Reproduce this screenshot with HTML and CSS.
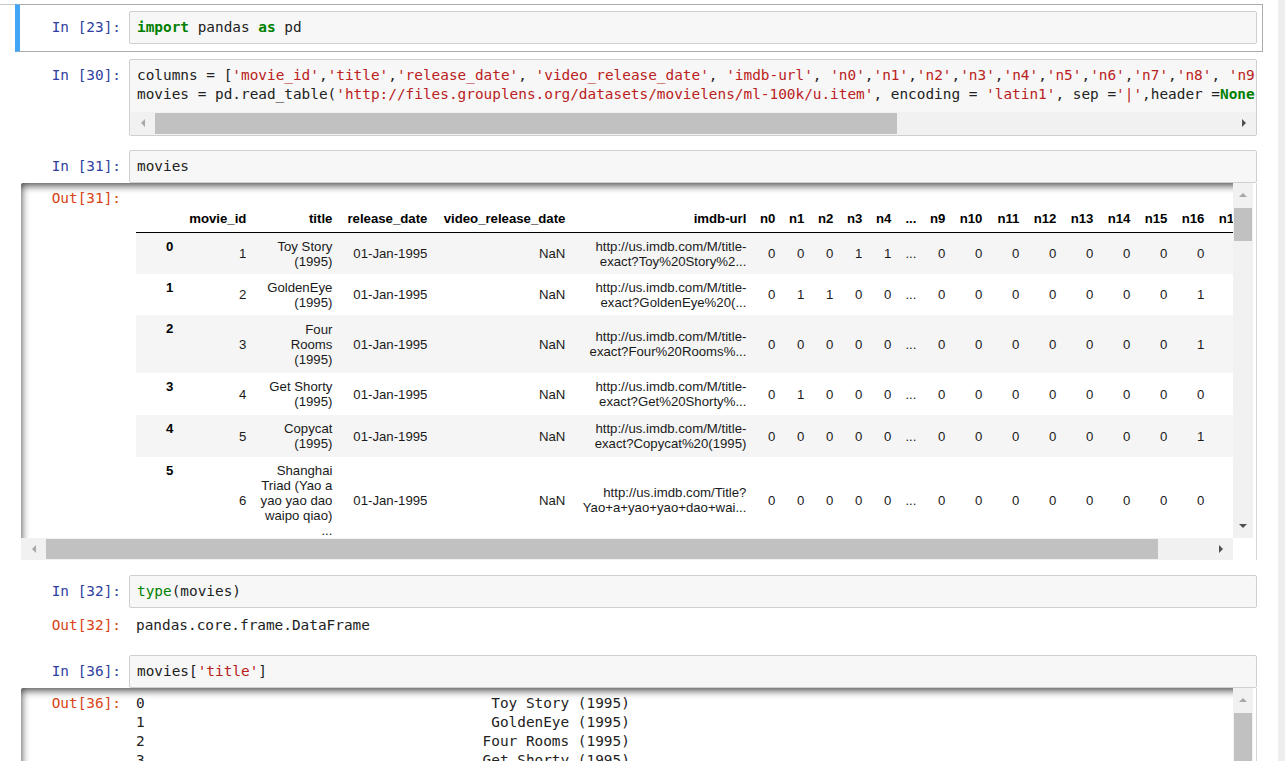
FILE: index.html
```html
<!DOCTYPE html>
<html>
<head>
<meta charset="utf-8">
<title>Notebook</title>
<link rel="stylesheet" href="styles.css">
</head>
<body>
<div class="page">
  <div class="notebook">
    <div class="rule"></div>

    <div class="cell selected">
      <div class="row">
        <div class="prompt in">In [23]:</div>
        <div class="input">
          <div class="code"><div class="line"><span class="kw">import</span> pandas <span class="kw">as</span> pd</div></div>
        </div>
      </div>
    </div>

    <div class="cell">
      <div class="row">
        <div class="prompt in">In [30]:</div>
        <div class="input">
          <div class="code tall"><div class="line">columns = [<span class="s">'movie_id'</span>,<span class="s">'title'</span>,<span class="s">'release_date'</span>, <span class="s">'video_release_date'</span>, <span class="s">'imdb-url'</span>, <span class="s">'n0'</span>,<span class="s">'n1'</span>,<span class="s">'n2'</span>,<span class="s">'n3'</span>,<span class="s">'n4'</span>,<span class="s">'n5'</span>,<span class="s">'n6'</span>,<span class="s">'n7'</span>,<span class="s">'n8'</span>, <span class="s">'n9'</span>, <span class="s">'n10'</span>, <span class="s">'n11'</span>, <span class="s">'n12'</span>, <span class="s">'n13'</span>, <span class="s">'n14'</span>, <span class="s">'n15'</span>, <span class="s">'n16'</span>, <span class="s">'n17'</span>, <span class="s">'n18'</span>]</div><div class="line">movies = pd.read_table(<span class="s">'http://files.grouplens.org/datasets/movielens/ml-100k/u.item'</span>, encoding = <span class="s">'latin1'</span>, sep =<span class="s">'|'</span>,header =<span class="kw">None</span>, names = columns)</div></div>
          <div class="hbar">
            <div class="btn"><i class="arr left"></i></div>
            <div class="track"><div class="thumb code-thumb"></div></div>
            <div class="btn"><i class="arr right"></i></div>
          </div>
        </div>
      </div>
    </div>

    <div class="cell">
      <div class="row">
        <div class="prompt in">In [31]:</div>
        <div class="input">
          <div class="code"><div class="line">movies</div></div>
        </div>
      </div>
      <div class="oscroll">
        <div class="viewport">
          <div class="orow">
            <div class="prompt out">Out[31]:</div>
            <div class="subarea">
              <table class="df">
                <colgroup>
                  <col class="c-idx"><col class="c-id"><col class="c-title"><col class="c-rel"><col class="c-vid"><col class="c-url">
                  <col class="c-n"><col class="c-n"><col class="c-n"><col class="c-n"><col class="c-n"><col class="c-dots"><col class="c-n">
                  <col class="c-nn"><col class="c-nn"><col class="c-nn"><col class="c-nn"><col class="c-nn"><col class="c-nn"><col class="c-nn"><col class="c-nn"><col class="c-nn">
                </colgroup>
                <thead>
                  <tr>
                    <th></th><th>movie_id</th><th>title</th><th>release_date</th><th>video_release_date</th><th>imdb-url</th>
                    <th>n0</th><th>n1</th><th>n2</th><th>n3</th><th>n4</th><th>...</th><th>n9</th>
                    <th>n10</th><th>n11</th><th>n12</th><th>n13</th><th>n14</th><th>n15</th><th>n16</th><th>n17</th><th>n18</th>
                  </tr>
                </thead>
                <tbody>
                  <tr>
                    <th>0</th><td>1</td><td>Toy Story<br>(1995)</td><td>01-Jan-1995</td><td>NaN</td><td>http://us.imdb.com/M/title-<br>exact?Toy%20Story%2...</td>
                    <td>0</td><td>0</td><td>0</td><td>1</td><td>1</td><td>...</td><td>0</td>
                    <td>0</td><td>0</td><td>0</td><td>0</td><td>0</td><td>0</td><td>0</td><td>0</td><td>0</td>
                  </tr>
                  <tr>
                    <th>1</th><td>2</td><td>GoldenEye<br>(1995)</td><td>01-Jan-1995</td><td>NaN</td><td>http://us.imdb.com/M/title-<br>exact?GoldenEye%20(...</td>
                    <td>0</td><td>1</td><td>1</td><td>0</td><td>0</td><td>...</td><td>0</td>
                    <td>0</td><td>0</td><td>0</td><td>0</td><td>0</td><td>0</td><td>1</td><td>0</td><td>0</td>
                  </tr>
                  <tr class="h58">
                    <th>2</th><td>3</td><td>Four<br>Rooms<br>(1995)</td><td>01-Jan-1995</td><td>NaN</td><td>http://us.imdb.com/M/title-<br>exact?Four%20Rooms%...</td>
                    <td>0</td><td>0</td><td>0</td><td>0</td><td>0</td><td>...</td><td>0</td>
                    <td>0</td><td>0</td><td>0</td><td>0</td><td>0</td><td>0</td><td>1</td><td>0</td><td>0</td>
                  </tr>
                  <tr class="h42">
                    <th>3</th><td>4</td><td>Get Shorty<br>(1995)</td><td>01-Jan-1995</td><td>NaN</td><td>http://us.imdb.com/M/title-<br>exact?Get%20Shorty%...</td>
                    <td>0</td><td>1</td><td>0</td><td>0</td><td>0</td><td>...</td><td>0</td>
                    <td>0</td><td>0</td><td>0</td><td>0</td><td>0</td><td>0</td><td>0</td><td>0</td><td>0</td>
                  </tr>
                  <tr class="h42">
                    <th>4</th><td>5</td><td>Copycat<br>(1995)</td><td>01-Jan-1995</td><td>NaN</td><td>http://us.imdb.com/M/title-<br>exact?Copycat%20(1995)</td>
                    <td>0</td><td>0</td><td>0</td><td>0</td><td>0</td><td>...</td><td>0</td>
                    <td>0</td><td>0</td><td>0</td><td>0</td><td>0</td><td>0</td><td>1</td><td>0</td><td>0</td>
                  </tr>
                  <tr>
                    <th>5</th><td>6</td><td>Shanghai<br>Triad (Yao a<br>yao yao dao<br>waipo qiao)<br>...</td><td>01-Jan-1995</td><td>NaN</td><td>http://us.imdb.com/Title?<br>Yao+a+yao+yao+dao+wai...</td>
                    <td>0</td><td>0</td><td>0</td><td>0</td><td>0</td><td>...</td><td>0</td>
                    <td>0</td><td>0</td><td>0</td><td>0</td><td>0</td><td>0</td><td>0</td><td>0</td><td>0</td>
                  </tr>
                </tbody>
              </table>
            </div>
          </div>
        </div>
        <div class="vbar">
          <div class="vbtn"><i class="arr up"></i></div>
          <div class="vtrack"><div class="vthumb"></div></div>
          <div class="vbtn"><i class="arr down"></i></div>
        </div>
        <div class="hbar">
          <div class="btn"><i class="arr left"></i></div>
          <div class="track"><div class="thumb out-thumb"></div></div>
          <div class="btn"><i class="arr right"></i></div>
        </div>
        <div class="corner"></div>
      </div>
    </div>

    <div class="cell">
      <div class="row">
        <div class="prompt in">In [32]:</div>
        <div class="input">
          <div class="code"><div class="line"><span class="bi">type</span>(movies)</div></div>
        </div>
      </div>
      <div class="orow plain">
        <div class="prompt out">Out[32]:</div>
        <div class="text">pandas.core.frame.DataFrame</div>
      </div>
    </div>

    <div class="cell">
      <div class="row">
        <div class="prompt in">In [36]:</div>
        <div class="input">
          <div class="code"><div class="line">movies[<span class="s">'title'</span>]</div></div>
        </div>
      </div>
      <div class="oscroll">
        <div class="viewport">
          <div class="orow">
            <div class="prompt out">Out[36]:</div>
            <div class="text series">0                                        Toy Story (1995)
1                                        GoldenEye (1995)
2                                       Four Rooms (1995)
3                                       Get Shorty (1995)
4                                          Copycat (1995)</div>
          </div>
        </div>
        <div class="vbar">
          <div class="vbtn"><i class="arr up"></i></div>
          <div class="vtrack"><div class="vthumb long"></div></div>
          <div class="vbtn"><i class="arr down"></i></div>
        </div>
        <div class="hbar">
          <div class="btn"><i class="arr left"></i></div>
          <div class="track"><div class="thumb out-thumb"></div></div>
          <div class="btn"><i class="arr right"></i></div>
        </div>
        <div class="corner"></div>
      </div>
    </div>
  </div>
  <div class="gutter"></div>
</div>
</body>
</html>
```

FILE: styles.css
```css
* { box-sizing: border-box; }

html, body {
  margin: 0;
  padding: 0;
  height: 761px;
  overflow: hidden;
  background: #fff;
}

body {
  font-family: "DejaVu Sans Mono", monospace;
}

.page {
  display: flex;
  height: 761px;
}

.notebook {
  width: 1278px;
  flex: none;
  background: #fff;
}

.gutter {
  flex: 1;
  background: #eeeeee;
}

.rule {
  width: 1263px;
  height: 5px;
  border-bottom: 1px solid #c9c9c9;
}

.cell {
  margin-left: 15px;
  width: 1248px;
  border: 1px solid transparent;
  border-left-width: 5px;
  padding: 6px 5px 6.5px 1px;
}

.cell.selected {
  border-color: #ababab;
  border-left-color: #42a5f5;
  margin-top: -1px;
}

.row {
  display: flex;
}

.prompt {
  width: 108px;
  flex: none;
  text-align: right;
  padding: 7px 8px 0 0;
  font: 14.4px/19px "DejaVu Sans Mono", monospace;
  white-space: pre;
}

.prompt.in { color: #303f9f; }
.prompt.out { color: #d84315; padding-top: 6px; }

.input {
  flex: 1;
  min-width: 0;
  border: 1px solid #cfcfcf;
  border-radius: 2px;
  background: #f7f7f7;
  overflow: hidden;
}

.code {
  padding: 6px 7px;
  font: 14.4px/19px "DejaVu Sans Mono", monospace;
  color: #222;
  white-space: pre;
  overflow: hidden;
}

.code.tall { padding-bottom: 8px; }

.kw { color: #008000; font-weight: bold; }
.s { color: #ba2121; }
.bi { color: #008000; }

/* scrollbars */
.hbar {
  display: flex;
  height: 23px;
  background: #f1f1f1;
}

.oscroll .hbar { height: 22px; }

.btn {
  width: 25px;
  flex: none;
  display: flex;
  align-items: center;
  justify-content: center;
}

.track {
  flex: 1;
  display: flex;
}

.thumb {
  background: #c1c1c1;
  margin: 1px 0;
}

.code-thumb { width: 742px; }
.out-thumb { width: 1112px; }

.vbar {
  display: flex;
  flex-direction: column;
  background: #f1f1f1;
}

.vbtn {
  height: 24px;
  flex: none;
  display: flex;
  align-items: center;
  justify-content: center;
}

.vtrack { flex: 1; }

.vthumb {
  height: 33px;
  margin: 1px 1px 0;
  background: #c1c1c1;
}

.vthumb.long { height: 260px; }

.arr {
  display: block;
  width: 0;
  height: 0;
  border-style: solid;
}

.arr.up { border-width: 0 4px 4px 4px; border-color: transparent transparent #a8a8a8 transparent; }
.arr.down { border-width: 4px 4px 0 4px; border-color: #505050 transparent transparent transparent; }
.arr.left { border-width: 4px 4px 4px 0; border-color: transparent #a8a8a8 transparent transparent; }
.arr.right { border-width: 4px 0 4px 4px; border-color: transparent transparent transparent #505050; }

.corner { background: #fff; }

/* output areas */
.oscroll {
  display: grid;
  grid-template-columns: 1212px 20px;
  grid-template-rows: 355px 22px;
  width: 1236px;
  padding-right: 3px;
  border-right: 1px solid #d6d6d6;
}

.viewport {
  position: relative;
  overflow: hidden;
}

.viewport::after {
  content: "";
  position: absolute;
  top: 0;
  left: 0;
  right: -14px;
  bottom: -14px;
  box-shadow: inset 0 2px 8px rgba(0, 0, 0, 0.8);
  border-radius: 2px;
  pointer-events: none;
}

.orow {
  display: flex;
}

.subarea {
  flex: none;
  padding: 6px 7px;
}

.text {
  flex: none;
  padding: 6px 7px 0;
  font: 14.4px/19px "DejaVu Sans Mono", monospace;
  color: #222;
  white-space: pre;
}

.plain { height: 32.5px; }
.plain .prompt { padding-top: 8px; }
.plain .text { padding-top: 8px; }

/* dataframe */
.df {
  border-collapse: collapse;
  border-spacing: 0;
  table-layout: fixed;
  width: 1149px;
  margin-top: 15px;
  font: 13.2px "Liberation Sans", Arial, sans-serif;
  color: #000;
}

.c-idx { width: 44px; }
.c-id { width: 73px; }
.c-title { width: 86px; }
.c-rel { width: 95px; }
.c-vid { width: 138px; }
.c-url { width: 181px; }
.c-n { width: 29px; }
.c-dots { width: 25px; }
.c-nn { width: 37px; }

.df th,
.df td {
  padding: 5.5px 6.6px;
  text-align: right;
  vertical-align: middle;
  line-height: 15px;
  white-space: nowrap;
}

.df td { color: #1a1a1a; }

.df thead {
  border-bottom: 1px solid #000;
}

.df thead th {
  padding: 6.5px 6.6px;
  vertical-align: bottom;
  font-weight: bold;
}

.df tbody th {
  vertical-align: top;
  font-weight: bold;
}

.df tbody tr:nth-child(odd) { background: #f5f5f5; }

.df tr.h58 { height: 58px; }
.df tr.h42 { height: 42px; }
```
